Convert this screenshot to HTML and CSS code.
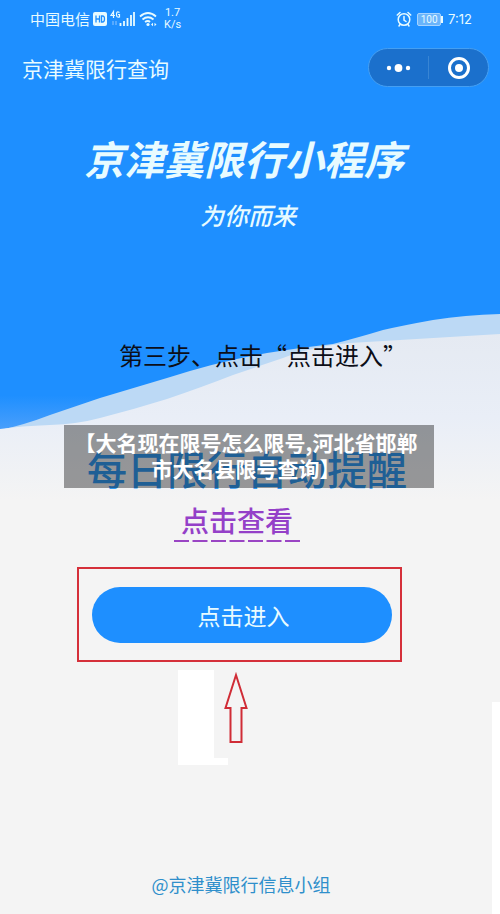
FILE: index.html
```html
<!DOCTYPE html>
<html lang="zh-CN">
<head>
<meta charset="utf-8">
<meta name="viewport" content="width=device-width, initial-scale=1">
<title>京津冀限行查询</title>
<link rel="stylesheet" href="styles.css">
</head>
<body>
<main class="page">
  <svg class="waves" viewBox="0 0 500 500" preserveAspectRatio="none" aria-hidden="true">
    <defs>
      <linearGradient id="sky" x1="0" y1="0" x2="0" y2="1">
        <stop offset="0.92" stop-color="#1e8fff"/>
        <stop offset="1" stop-color="#4a9ffb"/>
      </linearGradient>
      <linearGradient id="snow" x1="0" y1="0" x2="0" y2="1">
        <stop offset="0" stop-color="#e5eaf2"/>
        <stop offset="0.5" stop-color="#e9eef7"/>
        <stop offset="1" stop-color="#f4f4f4"/>
      </linearGradient>
    </defs>
    <rect width="500" height="430" fill="url(#sky)"/>
    <path fill="#bcd9f5" d="M0 430 Q24 425 50 415 L100 398 L167 378 Q220 361 267 353 Q305 347 333 344 Q360 337 383 330 Q405 325 433 320 Q465 315 500 314 V430Z"/>
    <path fill="url(#snow)" d="M0 429 Q20 426 50 425 Q78 424 100 418 Q135 409 167 399 Q205 386 233 375 L283 358 Q312 346 350 343 L500 334 V500 H0Z"/>
  </svg>
  <div class="edge" aria-hidden="true"></div>

  <div class="status">
    <span class="carrier">中国电信</span>
    <svg class="signals" width="66" height="20" viewBox="0 0 66 20" aria-hidden="true">
      <rect x="1" y="3" width="14" height="14" rx="2" fill="#e8fbff"/>
      <path d="M4 6.500V13.500M7.500 6.500V13.500M4 10H7.500M9.500 7V13H10.500Q12.500 13 12.500 10Q12.500 7 10.500 7Z" fill="none" stroke="#1e8fff" stroke-width="1.300"/>
      <path d="M21.500 9V2.500L19 6.500H23M27.500 3.500Q24.500 1.500 24.500 5.500Q24.500 9 27.500 8V5.500H26" fill="none" stroke="#e8fbff" stroke-width="1.200"/>
      <path d="M21 12v4M24 12v4" stroke="#7dbdff" stroke-width="1.200"/>
      <path d="M28.500 14v3M32 12v5M35.500 9v8M39 6v11M42 3v14" stroke="#e8fbff" stroke-width="1.800"/>
      <path d="M48 7.500Q56 0.500 64 7.500M50.500 10.500Q56 6 61.500 10.500M53 13Q56 11 58 13" fill="none" stroke="#e8fbff" stroke-width="1.800"/>
      <circle cx="56" cy="15.500" r="1.600" fill="#e8fbff"/>
      <path d="M59 15.500l2-1.700v3.400zM64.500 15.500l-2-1.700v3.400z" fill="#e8fbff"/>
    </svg>
    <span class="speed">1.7<br>K/s</span>
    <svg class="alarm" width="16" height="16" viewBox="0 0 16 16" aria-hidden="true">
      <g fill="none" stroke="#e8fbff" stroke-width="1.500" stroke-linecap="round">
        <circle cx="8" cy="8.500" r="5.800"/><path d="M8 5.500V9L10 10.500M1.300 4L4 1.500M14.700 4L12 1.500M4 13.500L3 15M12 13.500L13 15"/>
      </g>
    </svg>
    <span class="battery">100</span>
    <span class="clock">7:12</span>
  </div>

  <header class="bar">
    <span class="name">京津冀限行查询</span>
    <div class="capsule">
      <button type="button" aria-label="更多">
        <svg width="26" height="10" viewBox="0 0 26 10"><g fill="#fff"><circle cx="3" cy="5" r="2.200"/><circle cx="12.500" cy="5" r="3.900"/><circle cx="22" cy="5" r="2.200"/></g></svg>
      </button>
      <button type="button" aria-label="关闭">
        <svg width="24" height="24" viewBox="0 0 24 24"><circle cx="12" cy="12" r="9.500" fill="none" stroke="#fff" stroke-width="3"/><circle cx="12" cy="12" r="4" fill="#fff"/></svg>
      </button>
    </div>
  </header>

  <h1 class="headline">京津冀限行小程序</h1>
  <p class="tagline">为你而来</p>
  <p class="step">第三步、点击“点击进入”</p>

  <section class="reminder">
    <h2 class="daily">每日限行自动提醒</h2>
    <p class="caption">【大名现在限号怎么限号,河北省邯郸市大名县限号查询】</p>
  </section>

  <a class="view" href="#enter">点击查看
    <svg width="126" height="2" viewBox="0 0 126 2" aria-hidden="true"><path d="M0 1H126" stroke="#9a45c4" stroke-width="2" stroke-dasharray="15 3.500"/></svg>
  </a>

  <div class="frame">
    <button class="enter" id="enter" type="button">点击进入</button>
  </div>

  <svg class="pointer" width="72" height="95" viewBox="0 0 72 95" aria-hidden="true">
    <path d="M0 0H36V88H50V95H0Z" fill="#fff"/>
    <path d="M58 5L68.500 38H63.500V72H52.500V38H47.500Z" fill="#f4f4f4" stroke="#d02c36" stroke-width="2"/>
  </svg>

  <footer class="credit">@京津冀限行信息小组</footer>
</main>
</body>
</html>
```
FILE: styles.css
```css
* {
  box-sizing: border-box;
}

body {
  margin: 0;
  background: #f4f4f4;
  font-family: "Noto Sans CJK SC", sans-serif;
}

h1,
h2,
p {
  margin: 0;
}

button {
  padding: 0;
  border: 0;
  background: none;
  font-family: inherit;
  color: inherit;
}

.page {
  position: relative;
  display: flex;
  flex-direction: column;
  min-height: 100vh;
  isolation: isolate;
  color: #e8fbff;
}

.waves {
  position: absolute;
  top: 0;
  left: 0;
  z-index: -1;
  width: 100%;
  height: 500px;
}

.edge {
  position: absolute;
  top: 702px;
  right: 0;
  bottom: 0;
  z-index: -1;
  width: 8px;
  background: #fff;
}

.status {
  display: flex;
  align-items: center;
  height: 38px;
  padding: 0 28px 0 30px;
}

.carrier {
  font-size: 15px;
  line-height: 20px;
}

.signals {
  margin-left: 2px;
}

.speed {
  margin-left: 6px;
  font: 11px/12px Roboto, sans-serif;
  text-align: center;
}

.alarm {
  margin-left: auto;
}

.battery {
  position: relative;
  width: 24px;
  margin: 0 7px 0 5px;
  border: 1px solid #a5d3ff;
  border-radius: 2px;
  background: #69b4fb;
  font: 10px/11px Roboto, sans-serif;
  text-align: center;
}

.battery::after {
  content: "";
  position: absolute;
  top: 2px;
  right: -3px;
  width: 2px;
  height: 7px;
  background: #e8fbff;
}

.clock {
  font: 13px/16px Inter, sans-serif;
}

.bar {
  display: flex;
  align-items: center;
  justify-content: space-between;
  padding: 10px 11px 0 22px;
}

.name {
  font-size: 21px;
  line-height: 32px;
}

.capsule {
  display: flex;
  width: 121px;
  height: 39px;
  border: 1px solid #459ff2;
  border-radius: 20px;
  background: #1b70cc;
}

.capsule button {
  display: flex;
  flex: 1;
  align-items: center;
  justify-content: center;
}

.capsule button + button {
  margin: 7px 0;
  border-left: 1px solid #3885d4;
}

.headline {
  margin: 46px 12px 0 0;
  font-size: 40px;
  font-style: italic;
  font-weight: 700;
  line-height: 50px;
  text-align: center;
}

.tagline {
  margin: 16px 4px 0 0;
  font-size: 24px;
  font-style: italic;
  font-weight: 500;
  line-height: 32px;
  text-align: center;
}

.step {
  margin: 108px 0 0 26px;
  color: #0c0e18;
  font-size: 24px;
  line-height: 32px;
  text-align: center;
}

.reminder {
  display: grid;
  margin: 54px 66px 0 64px;
}

.reminder > * {
  grid-area: 1 / 1;
}

.daily {
  align-self: end;
  margin-right: 4px;
  color: #3399f0;
  font-size: 40px;
  font-weight: 500;
  line-height: 40px;
  text-align: center;
}

.caption {
  padding: 4px 14px 7px 8px;
  background: rgba(0, 0, 0, 0.38);
  color: #fff;
  font-size: 21px;
  font-weight: 700;
  line-height: 26px;
  text-align: center;
}

.view {
  display: flex;
  flex-direction: column;
  gap: 4px;
  align-items: center;
  margin: 16px 26px 0 0;
  color: #9440c8;
  font-size: 28px;
  font-weight: 500;
  line-height: 32px;
  text-decoration: none;
}

.frame {
  align-self: center;
  width: 65%;
  margin: 25px 22px 0 0;
  padding: 18px 8px 17px 13px;
  border: 2px solid #d5303a;
}

.enter {
  display: block;
  width: 100%;
  height: 56px;
  padding-left: 4px;
  border-radius: 28px;
  background: #1e8fff;
  color: #e8fbff;
  font-size: 23px;
  line-height: 32px;
}

.pointer {
  align-self: center;
  margin: 8px 72px 0 0;
}

.credit {
  margin: auto 18px 16px 0;
  color: #2f8fcb;
  font-size: 18px;
  line-height: 28px;
  text-align: center;
}
```
